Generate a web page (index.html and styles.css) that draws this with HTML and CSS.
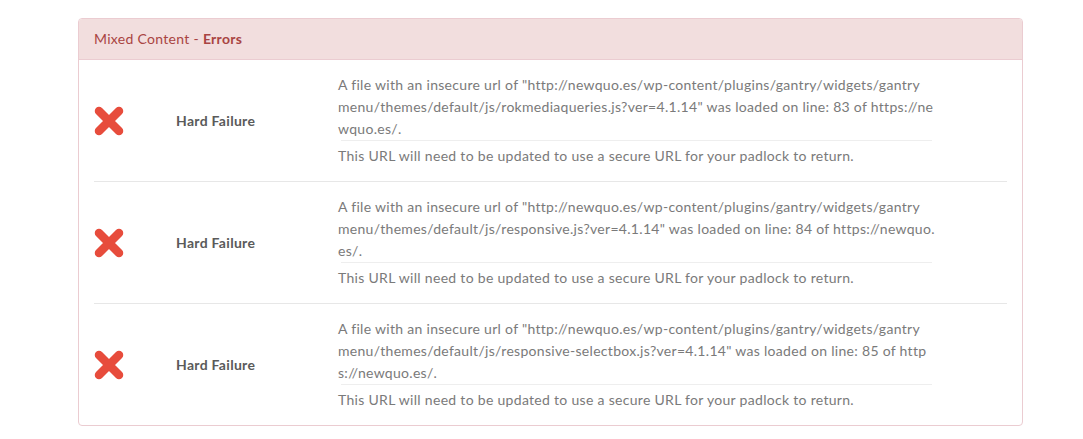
FILE: index.html
```html
<!DOCTYPE html>
<html>
<head>
<meta charset="utf-8">
<link rel="stylesheet" href="styles.css">
</head>
<body>
<div class="panel">
  <div class="panel-heading">Mixed Content - <strong>Errors</strong></div>
  <div class="panel-body">
    <div class="row">
      <div class="c-icon"><svg width="30" height="30" viewBox="0 0 30 30"><path d="M5 5 L25 25 M25 5 L5 25" stroke="#e74c3c" stroke-width="8.5" stroke-linecap="round"/></svg></div>
      <div class="c-status">Hard Failure</div>
      <div class="c-msg">
        <p class="msg">A file with an insecure url of "http://newquo.es/wp-content/plugins/gantry/widgets/gantry<br>menu/themes/default/js/rokmediaqueries.js?ver=4.1.14" was loaded on line: 83 of https://ne<br>wquo.es/.</p>
        <p class="note">This URL will need to be updated to use a secure URL for your padlock to return.</p>
      </div>
    </div>
    <div class="row">
      <div class="c-icon"><svg width="30" height="30" viewBox="0 0 30 30"><path d="M5 5 L25 25 M25 5 L5 25" stroke="#e74c3c" stroke-width="8.5" stroke-linecap="round"/></svg></div>
      <div class="c-status">Hard Failure</div>
      <div class="c-msg">
        <p class="msg">A file with an insecure url of "http://newquo.es/wp-content/plugins/gantry/widgets/gantry<br>menu/themes/default/js/responsive.js?ver=4.1.14" was loaded on line: 84 of https://newquo.<br>es/.</p>
        <p class="note">This URL will need to be updated to use a secure URL for your padlock to return.</p>
      </div>
    </div>
    <div class="row">
      <div class="c-icon"><svg width="30" height="30" viewBox="0 0 30 30"><path d="M5 5 L25 25 M25 5 L5 25" stroke="#e74c3c" stroke-width="8.5" stroke-linecap="round"/></svg></div>
      <div class="c-status">Hard Failure</div>
      <div class="c-msg">
        <p class="msg">A file with an insecure url of "http://newquo.es/wp-content/plugins/gantry/widgets/gantry<br>menu/themes/default/js/responsive-selectbox.js?ver=4.1.14" was loaded on line: 85 of http<br>s://newquo.es/.</p>
        <p class="note">This URL will need to be updated to use a secure URL for your padlock to return.</p>
      </div>
    </div>
  </div>
</div>
</body>
</html>
```
FILE: styles.css
```css
html, body {
  margin: 0;
  padding: 0;
  background: #fff;
}
body {
  font-family: "Lato", "Liberation Sans", sans-serif;
  font-size: 14px;
  line-height: 22px;
  letter-spacing: 0.3px;
  color: #7a7a7a;
  padding: 18px 0 0 78px;
}
.panel {
  width: 943px;
  border: 1px solid #ebccd1;
  border-radius: 4px;
  overflow: hidden;
}
.panel-heading {
  background: #f2dede;
  color: #a94442;
  border-bottom: 1px solid #ebccd1;
  padding: 9px 15px 9px 15px;
  height: 22px;
}
.panel-heading strong {
  font-weight: 700;
}
.panel-body {
  padding: 0 15px;
}
.row {
  display: flex;
  align-items: center;
  padding: 14px 0 14px;
  border-top: 1px solid #e7e7e7;
}
.row:first-child {
  border-top: none;
}
.c-icon {
  width: 82px;
  display: flex;
  align-items: center;
}
.c-icon svg {
  display: block;
}
.c-status {
  width: 162px;
  color: #5a5a5a;
  font-weight: 700;
}
.c-msg {
  width: 594px;
}
.msg {
  margin: 0;
  white-space: nowrap;
}
.note {
  margin: 0 0 0 3px;
  border-top: 1px solid #eee;
  padding-top: 4px;
  text-indent: -3px;
}
```
